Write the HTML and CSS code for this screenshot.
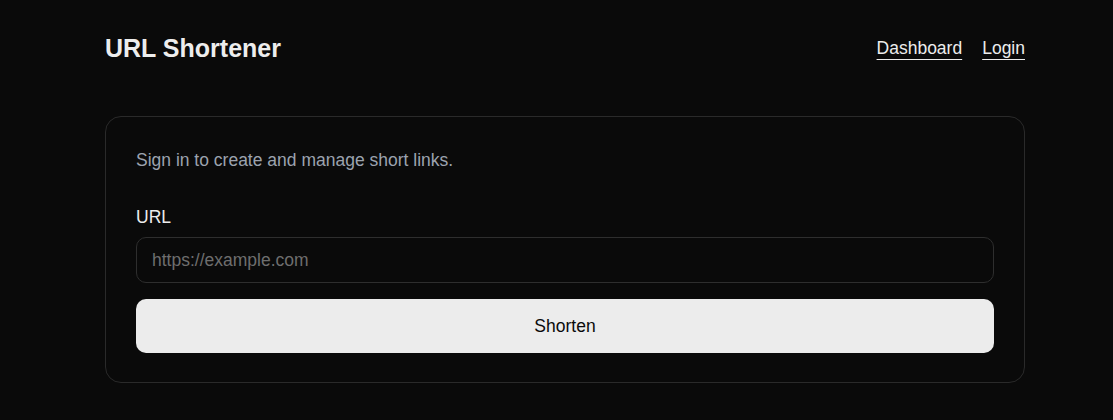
FILE: index.html
```html
<!DOCTYPE html>
<html lang="en">
<head>
<meta charset="utf-8">
<title>URL Shortener</title>
<link rel="stylesheet" href="styles.css">
</head>
<body>
<div class="page">
  <header class="header">
    <div class="brand">URL Shortener</div>
    <nav class="nav">
      <a href="#" class="nav-link">Dashboard</a>
      <a href="#" class="nav-link">Login</a>
    </nav>
  </header>
  <main class="card">
    <p class="hint">Sign in to create and manage short links.</p>
    <form class="form">
      <label class="label" for="url">URL</label>
      <input class="input" id="url" type="text" placeholder="https://example.com">
      <button class="button" type="button">Shorten</button>
    </form>
  </main>
</div>
</body>
</html>
```
FILE: styles.css
```css
* { box-sizing: border-box; }
html, body { margin: 0; padding: 0; }
body {
  background: #0a0a0a;
  color: #ededed;
  font-family: "Liberation Sans", Arial, sans-serif;
  font-size: 17.5px;
  line-height: 24px;
}
.page {
  width: 920px;
  margin-left: 105px;
  padding-top: 32px;
}
.header {
  display: flex;
  justify-content: space-between;
  align-items: center;
  height: 32px;
}
.brand {
  font-size: 25px;
  font-weight: 700;
  line-height: 32px;
  color: #ededed;
}
.nav {
  display: flex;
  gap: 20px;
}
.nav-link {
  color: #ededed;
  text-decoration: underline;
  text-underline-offset: 5px;
}
.card {
  margin-top: 52px;
  border: 1px solid #2a2a2a;
  border-radius: 16px;
  padding: 31px 30px 29px 30px;
}
.hint {
  margin: 0 0 33px 0;
  color: #9ca3af;
}
.form {
  display: flex;
  flex-direction: column;
}
.label {
  color: #ededed;
  margin-bottom: 8px;
}
.input {
  height: 46px;
  border: 1px solid #2e2e2e;
  border-radius: 10px;
  background: #0a0a0a;
  color: #ededed;
  padding: 0 15px;
  font: inherit;
  outline: none;
}
.input::placeholder { color: #6e6e6e; }
.button {
  margin-top: 16px;
  height: 54px;
  border: none;
  border-radius: 10px;
  background: #ececec;
  color: #0a0a0a;
  font: inherit;
  cursor: pointer;
}
```
